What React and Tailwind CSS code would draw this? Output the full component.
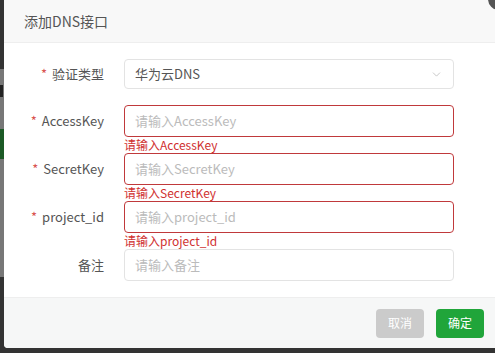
import { ChevronDown } from 'lucide-react';

const font = { fontFamily: '"Noto Sans CJK SC", "Open Sans", sans-serif' };

function Field({ label, required, placeholder, error }) {
  return (
    <div className="flex flex-col">
      <div className="flex items-center">
        <label className="w-[120px] pr-[20px] text-right text-[13px] leading-[32px] text-[#555]">
          {required && <span className="mr-[5px] text-[#d9534f]">*</span>}
          {label}
        </label>
        <div
          className={`flex h-[32px] w-[330px] items-center rounded-[4px] border px-[10px] text-[13px] text-[#bbb] ${
            error ? 'border-[#c0393b]' : 'border-[#e3e3e3]'
          }`}
        >
          {placeholder}
        </div>
      </div>
      <div className="h-[16px] pl-[120px] text-[12px] leading-[16px] text-[#d0302f]">{error}</div>
    </div>
  );
}

export default function App() {
  return (
    <div className="relative h-[353px] w-[495px] overflow-hidden bg-[#333]" style={font}>
      <div className="flex h-full w-[4px] flex-col">
        <div className="h-[69px] bg-[#333]" />
        <div className="flex h-[208px] flex-col bg-[#777]">
          <div className="mt-[16px] h-[12px] w-[3px] bg-[#222]" />
          <div className="mt-[32px] h-[30px] bg-[#1c5a26]" />
        </div>
      </div>

      <div className="absolute left-[4px] top-0 flex h-[348px] w-[505px] flex-col overflow-hidden rounded-b-[4px] bg-white">
        <div className="flex h-[43px] shrink-0 items-center border-b border-[#eee] bg-[#f8f8f8] pl-[20px] text-[14px] text-[#555]">
          添加DNS接口
        </div>

        <div className="flex flex-1 flex-col pt-[16px]">
          <div className="mb-[16px] flex items-center">
            <label className="w-[120px] pr-[20px] text-right text-[13px] leading-[30px] text-[#555]">
              <span className="mr-[5px] text-[#d9534f]">*</span>验证类型
            </label>
            <div className="flex h-[30px] w-[330px] items-center justify-between rounded-[4px] border border-[#e3e3e3] pl-[10px] pr-[10px] text-[13px] text-[#555]">
              <span>华为云DNS</span>
              <ChevronDown size={13} strokeWidth={1.2} className="text-[#aaa]" />
            </div>
          </div>
          <Field label="AccessKey" required placeholder="请输入AccessKey" error="请输入AccessKey" />
          <Field label="SecretKey" required placeholder="请输入SecretKey" error="请输入SecretKey" />
          <Field label="project_id" required placeholder="请输入project_id" error="请输入project_id" />
          <Field label="备注" placeholder="请输入备注" />
        </div>

        <div className="flex h-[51px] shrink-0 items-center gap-[12px] border-t border-[#eee] bg-[#f6f7f7] pl-[372px]">
          <button className="h-[29px] w-[48px] rounded-[4px] bg-[#cbcbcb] text-[12px] text-white">取消</button>
          <button className="h-[29px] w-[48px] rounded-[4px] bg-[#20a53a] text-[12px] text-white">确定</button>
        </div>
      </div>

      <div className="absolute right-[-15px] top-[-12px] h-[22px] w-[22px] rounded-full bg-[#555]" />
    </div>
  );
}
